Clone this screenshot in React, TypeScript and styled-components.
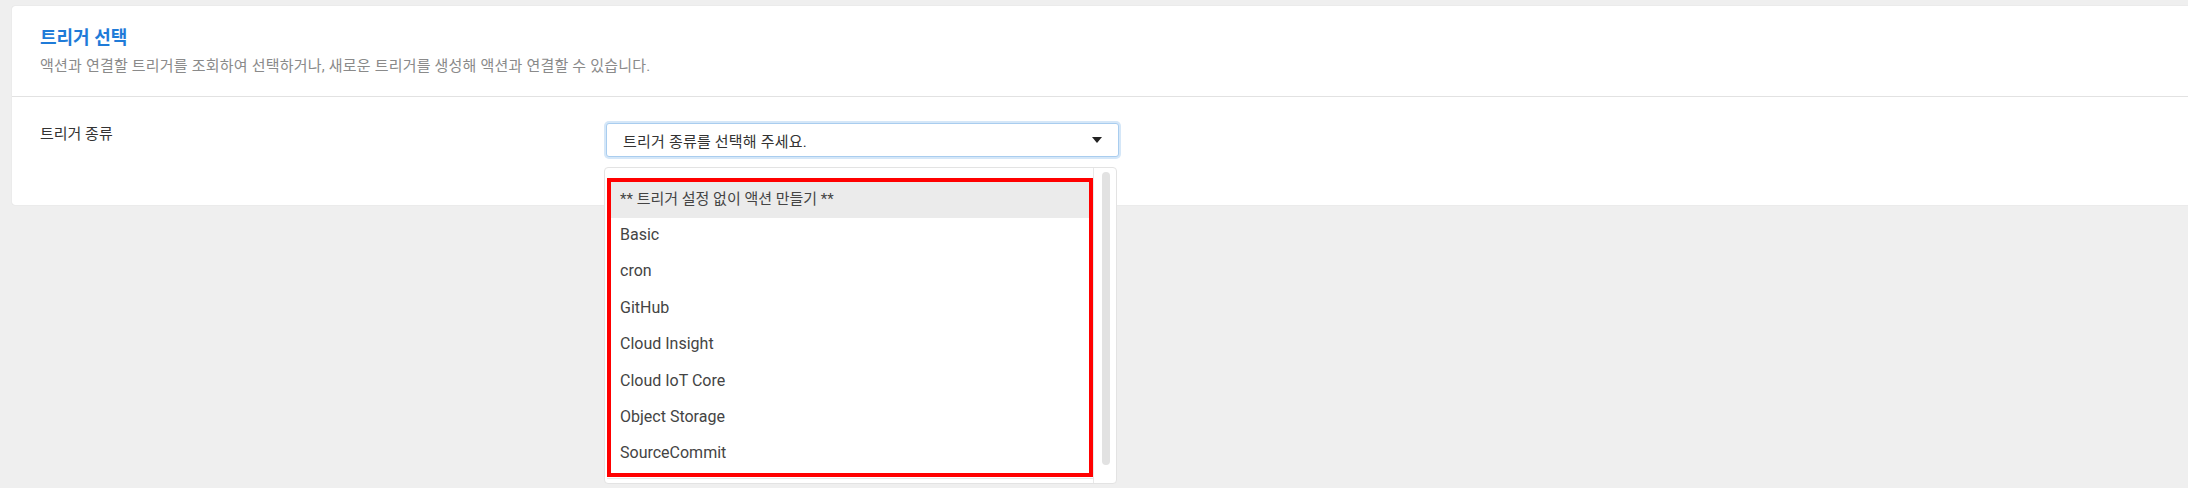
import React from "react";
import styled, { createGlobalStyle } from "styled-components";

const options = [
  { label: "** 트리거 설정 없이 액션 만들기 **", lang: "ko" },
  { label: "Basic" },
  { label: "cron" },
  { label: "GitHub" },
  { label: "Cloud Insight" },
  { label: "Cloud IoT Core" },
  { label: "Object Storage" },
  { label: "SourceCommit" },
];

const TriggerSelect = () => {
  return (
    <Page>
      <GlobalStyle />
      <Card>
        <Header>
          <Title>트리거 선택</Title>
          <Description>
            액션과 연결할 트리거를 조회하여 선택하거나, 새로운 트리거를 생성해 액션과 연결할 수 있습니다.
          </Description>
        </Header>
        <Body>
          <Label>트리거 종류</Label>
          <SelectWrap>
            <SelectBox>
              <Placeholder>트리거 종류를 선택해 주세요.</Placeholder>
              <Caret />
            </SelectBox>
            <Dropdown>
              <ListArea>
                <Options>
                  <Marked>
                    {options.map((opt, i) => (
                      <Option key={opt.label} lang={opt.lang} $active={i === 0}>
                        {opt.label}
                      </Option>
                    ))}
                  </Marked>
                </Options>
              </ListArea>
              <ScrollTrack>
                <Thumb />
              </ScrollTrack>
            </Dropdown>
          </SelectWrap>
        </Body>
      </Card>
    </Page>
  );
};

export default TriggerSelect;

const GlobalStyle = createGlobalStyle`
  body {
    margin: 0;
    background: #efefef;
    font-family: "Roboto", "Noto Sans CJK KR", sans-serif;
    overflow: hidden;
  }
`;

const Page = styled.div`
  min-height: 100vh;
  padding: 6px 0 0 12px;
  box-sizing: border-box;
  overflow: hidden;
`;

const Card = styled.div`
  margin-right: -12px;
  background: #fff;
  border-radius: 3px 0 0 3px;
  box-shadow: 0 0 1px rgba(0, 0, 0, 0.18);
`;

const Header = styled.div`
  padding: 20px 28px 20px;
  border-bottom: 1px solid #e2e2e2;
`;

const Title = styled.div`
  font-size: 18px;
  line-height: 24px;
  font-weight: 700;
  color: #1f7bd8;
`;

const Description = styled.div`
  margin-top: 6px;
  font-size: 15px;
  line-height: 20px;
  letter-spacing: 0.2px;
  color: #8a8a8a;
`;

const Body = styled.div`
  display: grid;
  grid-template-columns: 564px 517px;
  padding: 24px 28px 46px;
`;

const Label = styled.div`
  padding-top: 3px;
  font-size: 15px;
  line-height: 20px;
  color: #333;
`;

const SelectWrap = styled.div`
  position: relative;
  width: 517px;
  height: 38px;
`;

const SelectBox = styled.div`
  display: flex;
  align-items: center;
  justify-content: space-between;
  box-sizing: border-box;
  height: 34px;
  margin: 2px;
  padding: 0 16px;
  border: 1px solid #a9cdef;
  border-radius: 3px;
  box-shadow: 0 0 0 2px #d5e7f8;
  background: #fff;
`;

const Placeholder = styled.span`
  font-size: 15px;
  letter-spacing: 0.2px;
  color: #333;
`;

const Caret = styled.span`
  width: 0;
  height: 0;
  border-left: 5px solid transparent;
  border-right: 5px solid transparent;
  border-top: 6px solid #222;
`;

const Dropdown = styled.div`
  position: absolute;
  top: 46px;
  left: 0;
  display: flex;
  box-sizing: border-box;
  width: 513px;
  height: 317px;
  border: 1px solid #e3e3e3;
  border-radius: 4px;
  background: #fff;
  z-index: 2;
`;

const ListArea = styled.div`
  width: 489px;
  box-sizing: border-box;
  padding: 10px 0 0 2px;
  border-right: 1px solid #e8e8e8;
`;

const Options = styled.div`
  padding-bottom: 1px;
  border-bottom: 1px solid #e8e8e8;
`;

const Marked = styled.div`
  border: 4px solid #ff0000;
`;

const Option = styled.div<{ $active?: boolean }>`
  display: flex;
  align-items: center;
  box-sizing: border-box;
  height: 36.4px;
  padding: 0 0 4px 9px;
  font-size: 16px;
  color: #444;
  background: ${(p) => (p.$active ? "#ebebeb" : "#fff")};

  &:lang(ko) {
    font-size: 15px;
    padding-bottom: 5px;
  }
`;

const ScrollTrack = styled.div`
  flex: 1;
  padding: 4px 6px 0 8px;
`;

const Thumb = styled.div`
  width: 8px;
  height: 293px;
  border-radius: 4px;
  background: #e2e2e2;
`;
